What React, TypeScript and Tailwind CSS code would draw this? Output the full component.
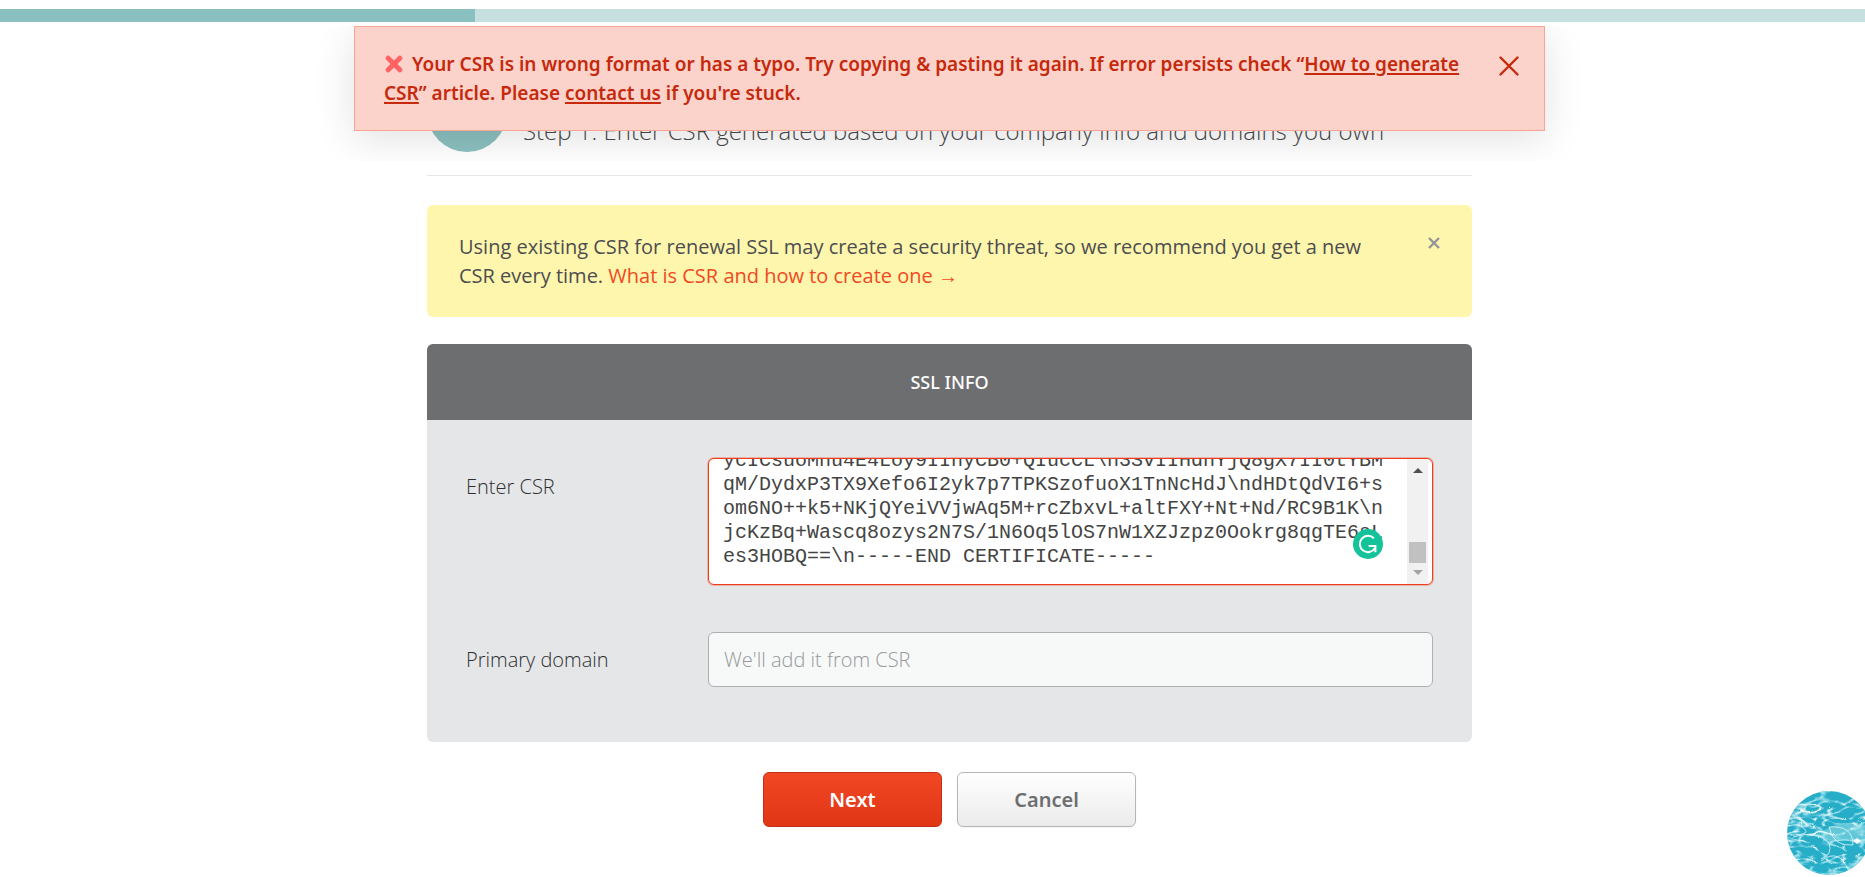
import React, { useEffect, useRef } from "react";

const csr = [
  "ycICsuoMnu4E4Loy9IInyCB0+QIucCL\\n3SvIIHdnYjQ8gX7II0tYBM",
  "qM/DydxP3TX9Xefo6I2yk7p7TPKSzofuoX1TnNcHdJ\\ndHDtQdVI6+s",
  "om6NO++k5+NKjQYeiVVjwAq5M+rcZbxvL+altFXY+Nt+Nd/RC9B1K\\n",
  "jcKzBq+Wascq8ozys2N7S/1N6Oq5lOS7nW1XZJzpz0Ookrg8qgTE6sL",
  "es3HOBQ==\\n-----END CERTIFICATE-----",
].join("\n");

function ErrorAlert() {
  return (
    <div className="absolute inset-x-0 top-[26px] z-10 flex justify-center overflow-hidden px-8 pb-[30px]">
      <div
        role="alert"
        className="flex w-full max-w-[1191px] items-start border border-[#f9a595] bg-[#fbd3cb] pt-[23px] pr-[25px] pb-[22px] pl-[29px] text-[19px] leading-[29px] font-semibold text-[#c6290c] shadow-[0_8px_40px_rgba(0,0,0,0.12)]"
      >
        <p className="w-[1096px]">
          <svg viewBox="0 0 18 18" className="mr-[9px] ml-px inline-block size-[18px] align-[-2px]" aria-hidden="true">
            <path d="M3.2 3.2 14.8 14.8M14.8 3.2 3.2 14.8" stroke="#ff6464" strokeWidth="5" strokeLinecap="round" />
          </svg>
          Your CSR is in wrong format or has a typo. Try copying &amp; pasting it again. If error persists check “
          <a href="#how-to" className="underline decoration-2 underline-offset-2">How to generate CSR</a>” article. Please{" "}
          <a href="#contact" className="underline decoration-2 underline-offset-2">contact us</a> if you're stuck.
        </p>
        <button type="button" aria-label="Close" className="mt-[6px] ml-auto shrink-0">
          <svg viewBox="0 0 20 20" className="size-5" aria-hidden="true">
            <path d="M1.5 1.5 18.5 18.5M18.5 1.5 1.5 18.5" stroke="#c6290c" strokeWidth="2.4" strokeLinecap="round" />
          </svg>
        </button>
      </div>
    </div>
  );
}

function CsrField() {
  const ref = useRef<HTMLTextAreaElement>(null);
  useEffect(() => {
    if (ref.current) ref.current.scrollTop = ref.current.scrollHeight;
  }, []);
  return (
    <div className="relative flex h-[127px] rounded-md border border-[#ee3e1c] bg-white ring-1 ring-[#ee3e1c]/30">
      <textarea
        id="csr"
        ref={ref}
        spellCheck={false}
        defaultValue={csr}
        className="w-full resize-none overflow-y-scroll rounded-md bg-transparent px-[14px] py-[15px] font-['Liberation_Mono','Courier_New',monospace] text-[20px] leading-6 whitespace-pre text-[#444] outline-none [scrollbar-width:none]"
      />
      <div className="mr-1 flex w-[21px] shrink-0 flex-col items-center bg-[#f1f1f1]" aria-hidden="true">
        <svg viewBox="0 0 10 5" className="mt-[9px] h-[5px] w-[10px]"><path d="M0 5 5 0l5 5z" fill="#505050" /></svg>
        <div className="mt-auto h-[21px] w-[17px] bg-[#c1c1c1]" />
        <svg viewBox="0 0 10 5" className="mt-[7px] mb-[9px] h-[5px] w-[10px]"><path d="M0 0l5 5 5-5z" fill="#a3a3a3" /></svg>
      </div>
      <svg viewBox="0 0 30 30" className="absolute right-[49px] bottom-[25px] size-[30px]" aria-hidden="true">
        <circle cx="15" cy="15" r="15" fill="#15c39a" />
        <path d="M20.9 9.200A8.200 8.200 0 1 0 22 19.300M15.600 17h6.800v6.200" fill="none" stroke="#fff" strokeWidth="2" />
      </svg>
    </div>
  );
}

function WaterBubble() {
  return (
    <svg viewBox="0 0 84 84" className="size-[84px]" aria-hidden="true">
      <defs>
        <clipPath id="bubble"><circle cx="42" cy="42" r="42" /></clipPath>
        <filter id="veins" x="0" y="0" width="100%" height="100%" colorInterpolationFilters="sRGB">
          <feTurbulence type="turbulence" baseFrequency="0.035 0.07" numOctaves="2" seed="8" />
          <feColorMatrix values="0 0 0 0 0.92  0 0 0 0 0.98  0 0 0 0 0.99  -9 0 0 0 1.1" />
        </filter>
        <filter id="glints" x="0" y="0" width="100%" height="100%" colorInterpolationFilters="sRGB">
          <feTurbulence type="turbulence" baseFrequency="0.04 0.09" numOctaves="2" seed="21" />
          <feColorMatrix values="0 0 0 0 0.65  0 0 0 0 0.9  0 0 0 0 0.94  0 -6 0 0 1.1" />
        </filter>
      </defs>
      <g clipPath="url(#bubble)">
        <rect width="84" height="84" fill="#26adc8" />
        <path d="M36 40q24-14 48-4v18q-30-8-48-4z" fill="#8ad9e5" opacity=".6" />
        <rect width="84" height="84" filter="url(#glints)" />
        <rect width="84" height="84" filter="url(#veins)" />
        <path d="M2 28q14-5 13 8 12 8-12 8M6 46q24-8 36 6 4 12-8 16M42 36q24-2 24 18-20 2-24-18M34 70q18-14 28 10" fill="none" stroke="#e4f8fa" opacity=".8" />
        <path d="m70 47 4 3-4 3-4-3z" fill="#fff" />
      </g>
    </svg>
  );
}

export default function App() {
  return (
    <div className="relative min-h-screen overflow-hidden bg-white font-['Noto_Sans','Open_Sans',sans-serif]">
      <div className="relative -mr-[34px] pt-[9px]">
        <div className="h-[13px] bg-[#c6e0e0]">
          <div className="h-full w-1/4 bg-[#8bc0c0]" />
        </div>
        <ErrorAlert />

        <main className="mx-auto max-w-[1045px]">
          <header className="flex items-center gap-4 border-b border-[#e6e6e6] pt-[50px] pb-[23px]">
            <div className="size-20 shrink-0 rounded-full bg-[#8bc0c0]" />
            <h1 className="pt-[38px] font-['Open_Sans',sans-serif] text-[24px] leading-[32px] font-light text-[#47484a]">
              Step 1. Enter CSR generated based on your company info and domains you own
            </h1>
          </header>

          <section className="mt-[29px] flex items-start justify-between rounded-md bg-[#fef6ad] pt-[27px] pr-8 pb-[27px] pl-8 font-['Open_Sans',sans-serif] text-[20px] leading-[29px] text-[#4d4d4f]">
            <p className="max-w-[910px]">
              Using existing CSR for renewal SSL may create a security threat, so we recommend you get a new CSR every time.{" "}
              <a href="#what-is-csr" className="text-[#f04923]">What is CSR and how to create one →</a>
            </p>
            <button type="button" aria-label="Dismiss" className="mt-[5px]">
              <svg viewBox="0 0 12 12" className="size-3" aria-hidden="true">
                <path d="M1 1 11 11M11 1 1 11" stroke="#939598" strokeWidth="2.4" />
              </svg>
            </button>
          </section>

          <form onSubmit={(e) => e.preventDefault()}>
            <section className="mt-[27px] overflow-hidden rounded-md bg-[#e5e6e8]">
              <h2 className="flex h-[76px] items-center justify-center bg-[#6d6e70] text-[18px] font-medium text-white">SSL INFO</h2>
              <div className="grid grid-cols-[242px_1fr] gap-y-[47px] px-[39px] pt-[38px] pb-[55px] font-['Open_Sans',sans-serif] text-[20px] font-light text-[#2f2f31]">
                <label htmlFor="csr" className="pt-[15px] leading-[28px]">Enter CSR</label>
                <CsrField />
                <label htmlFor="domain" className="self-center leading-[28px]">Primary domain</label>
                <input
                  id="domain"
                  placeholder="We'll add it from CSR"
                  className="h-[55px] w-full rounded-md border border-[#adafb2] bg-[#f7f9f8] px-[15px] outline-none placeholder:text-[#96989b]"
                />
              </div>
            </section>

            <div className="mt-[30px] flex justify-center gap-[15px] text-[20px] font-semibold">
              <button type="submit" className="h-[55px] w-[179px] rounded-md border border-[#c03016] bg-linear-to-b from-[#f24724] to-[#e03616] text-white">
                Next
              </button>
              <button type="button" className="h-[55px] w-[179px] rounded-md border border-[#b5b6b8] bg-linear-to-b from-white to-[#ebebeb] text-[#6d6e70] shadow-xs">
                Cancel
              </button>
            </div>
          </form>
        </main>

        <div className="fixed right-[-6px] bottom-[2px]">
          <WaterBubble />
        </div>
      </div>
    </div>
  );
}
